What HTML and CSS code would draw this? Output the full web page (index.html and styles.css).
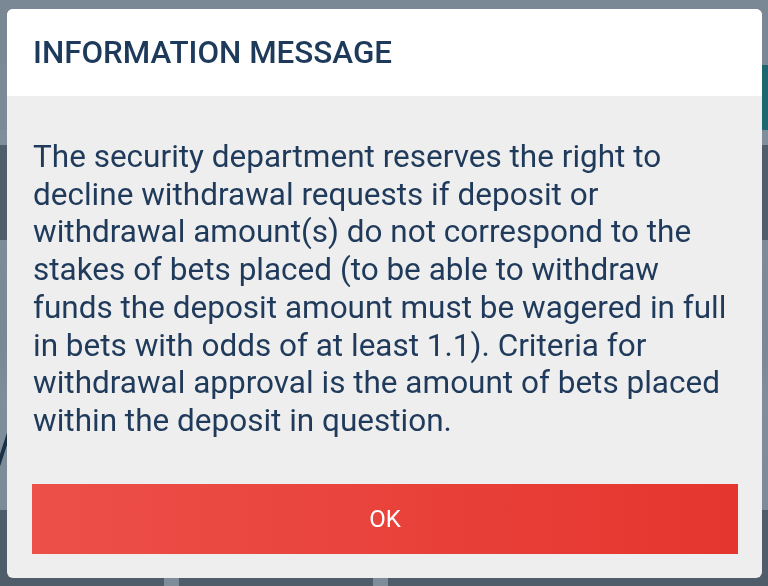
FILE: index.html
```html
<!DOCTYPE html>
<html lang="en">
<head>
  <meta charset="UTF-8">
  <meta name="viewport" content="width=device-width, initial-scale=1.0">
  <title>Information message</title>
  <link rel="stylesheet" href="styles.css">
</head>
<body>
  <div class="page">
    <div class="band band-top"></div>
    <div class="band band-nav">
      <div class="nav-fill"></div>
      <div class="nav-btn"></div>
    </div>
    <div class="band band-gap"></div>
    <div class="band band-dark"></div>
    <div class="band band-mid">
      <span class="slash"></span>
    </div>
    <div class="band band-foot">
      <div class="foot-chips">
        <span class="chip"></span>
        <span class="chip"></span>
      </div>
    </div>
  </div>

  <div class="overlay">
    <div class="modal">
      <div class="modal-header">
        <h1>INFORMATION MESSAGE</h1>
      </div>
      <div class="modal-body">
        <p>The security department reserves the right to decline withdrawal requests if deposit or withdrawal amount(s) do not correspond to the stakes of bets placed (to be able to withdraw funds the deposit amount must be wagered in full in bets with odds of at least 1.1). Criteria for withdrawal approval is the amount of bets placed within the deposit in question.</p>
        <button class="ok-btn">OK</button>
      </div>
    </div>
  </div>
</body>
</html>
```

FILE: styles.css
```css
body {
  margin: 0;
  font-family: Roboto, "Liberation Sans", Arial, sans-serif;
  background-color: #7b8996;
  overflow: hidden;
}
.page {
  height: 586px;
  display: flex;
  flex-direction: column;
}
.band-top {
  height: 65px;
  background-color: #7a8896;
}
.band-nav {
  height: 65px;
  display: flex;
}
.nav-fill {
  flex: 1;
  background-color: #7c8a97;
}
.nav-btn {
  width: 110px;
  background-color: #1e6670;
}
.band-gap {
  height: 15px;
  background-color: #808e9b;
}
.band-dark {
  height: 95px;
  background-color: #4f5e6a;
}
.band-mid {
  height: 270px;
  background: linear-gradient(#7d8b98, #7a8895 40%, #808e9b 60%, #7d8b98);
  position: relative;
}
.slash {
  position: absolute;
  left: 2px;
  top: 190px;
  width: 4px;
  height: 36px;
  background-color: #1b2f45;
  transform: skewX(-18deg);
}
.band-foot {
  flex: 1;
  background-color: #4e5d69;
  display: flex;
  align-items: flex-end;
}
.foot-chips {
  display: flex;
  gap: 194px;
  padding-left: 164px;
}
.chip {
  width: 15px;
  height: 8px;
  background-color: #7f8d9a;
}

.overlay {
  position: fixed;
  inset: 0;
}
.modal {
  position: absolute;
  top: 9px;
  left: 7px;
  width: 755px;
  height: 569px;
  border-radius: 6px;
  overflow: hidden;
  background-color: #eeeeee;
  display: flex;
  flex-direction: column;
}
.modal-header {
  height: 87px;
  flex-shrink: 0;
  background-color: #ffffff;
  display: flex;
  align-items: center;
  padding-left: 26px;
}
.modal-header h1 {
  margin: 0;
  font-size: 31.4px;
  font-weight: 500;
  color: #1d3a5b;
}
.modal-body {
  flex: 1;
  padding: 42px 24px 25px 25px;
  display: flex;
  flex-direction: column;
}
.modal-body p {
  margin: 0 6px 44px 1px;
  font-size: 31.5px;
  line-height: 37.7px;
  color: #1f3a5a;
}
.ok-btn {
  height: 70px;
  flex-shrink: 0;
  border: none;
  border-radius: 0;
  background: linear-gradient(90deg, #ec5049, #e5352e);
  color: #ffffff;
  font-family: inherit;
  font-size: 24px;
  cursor: pointer;
}
```
